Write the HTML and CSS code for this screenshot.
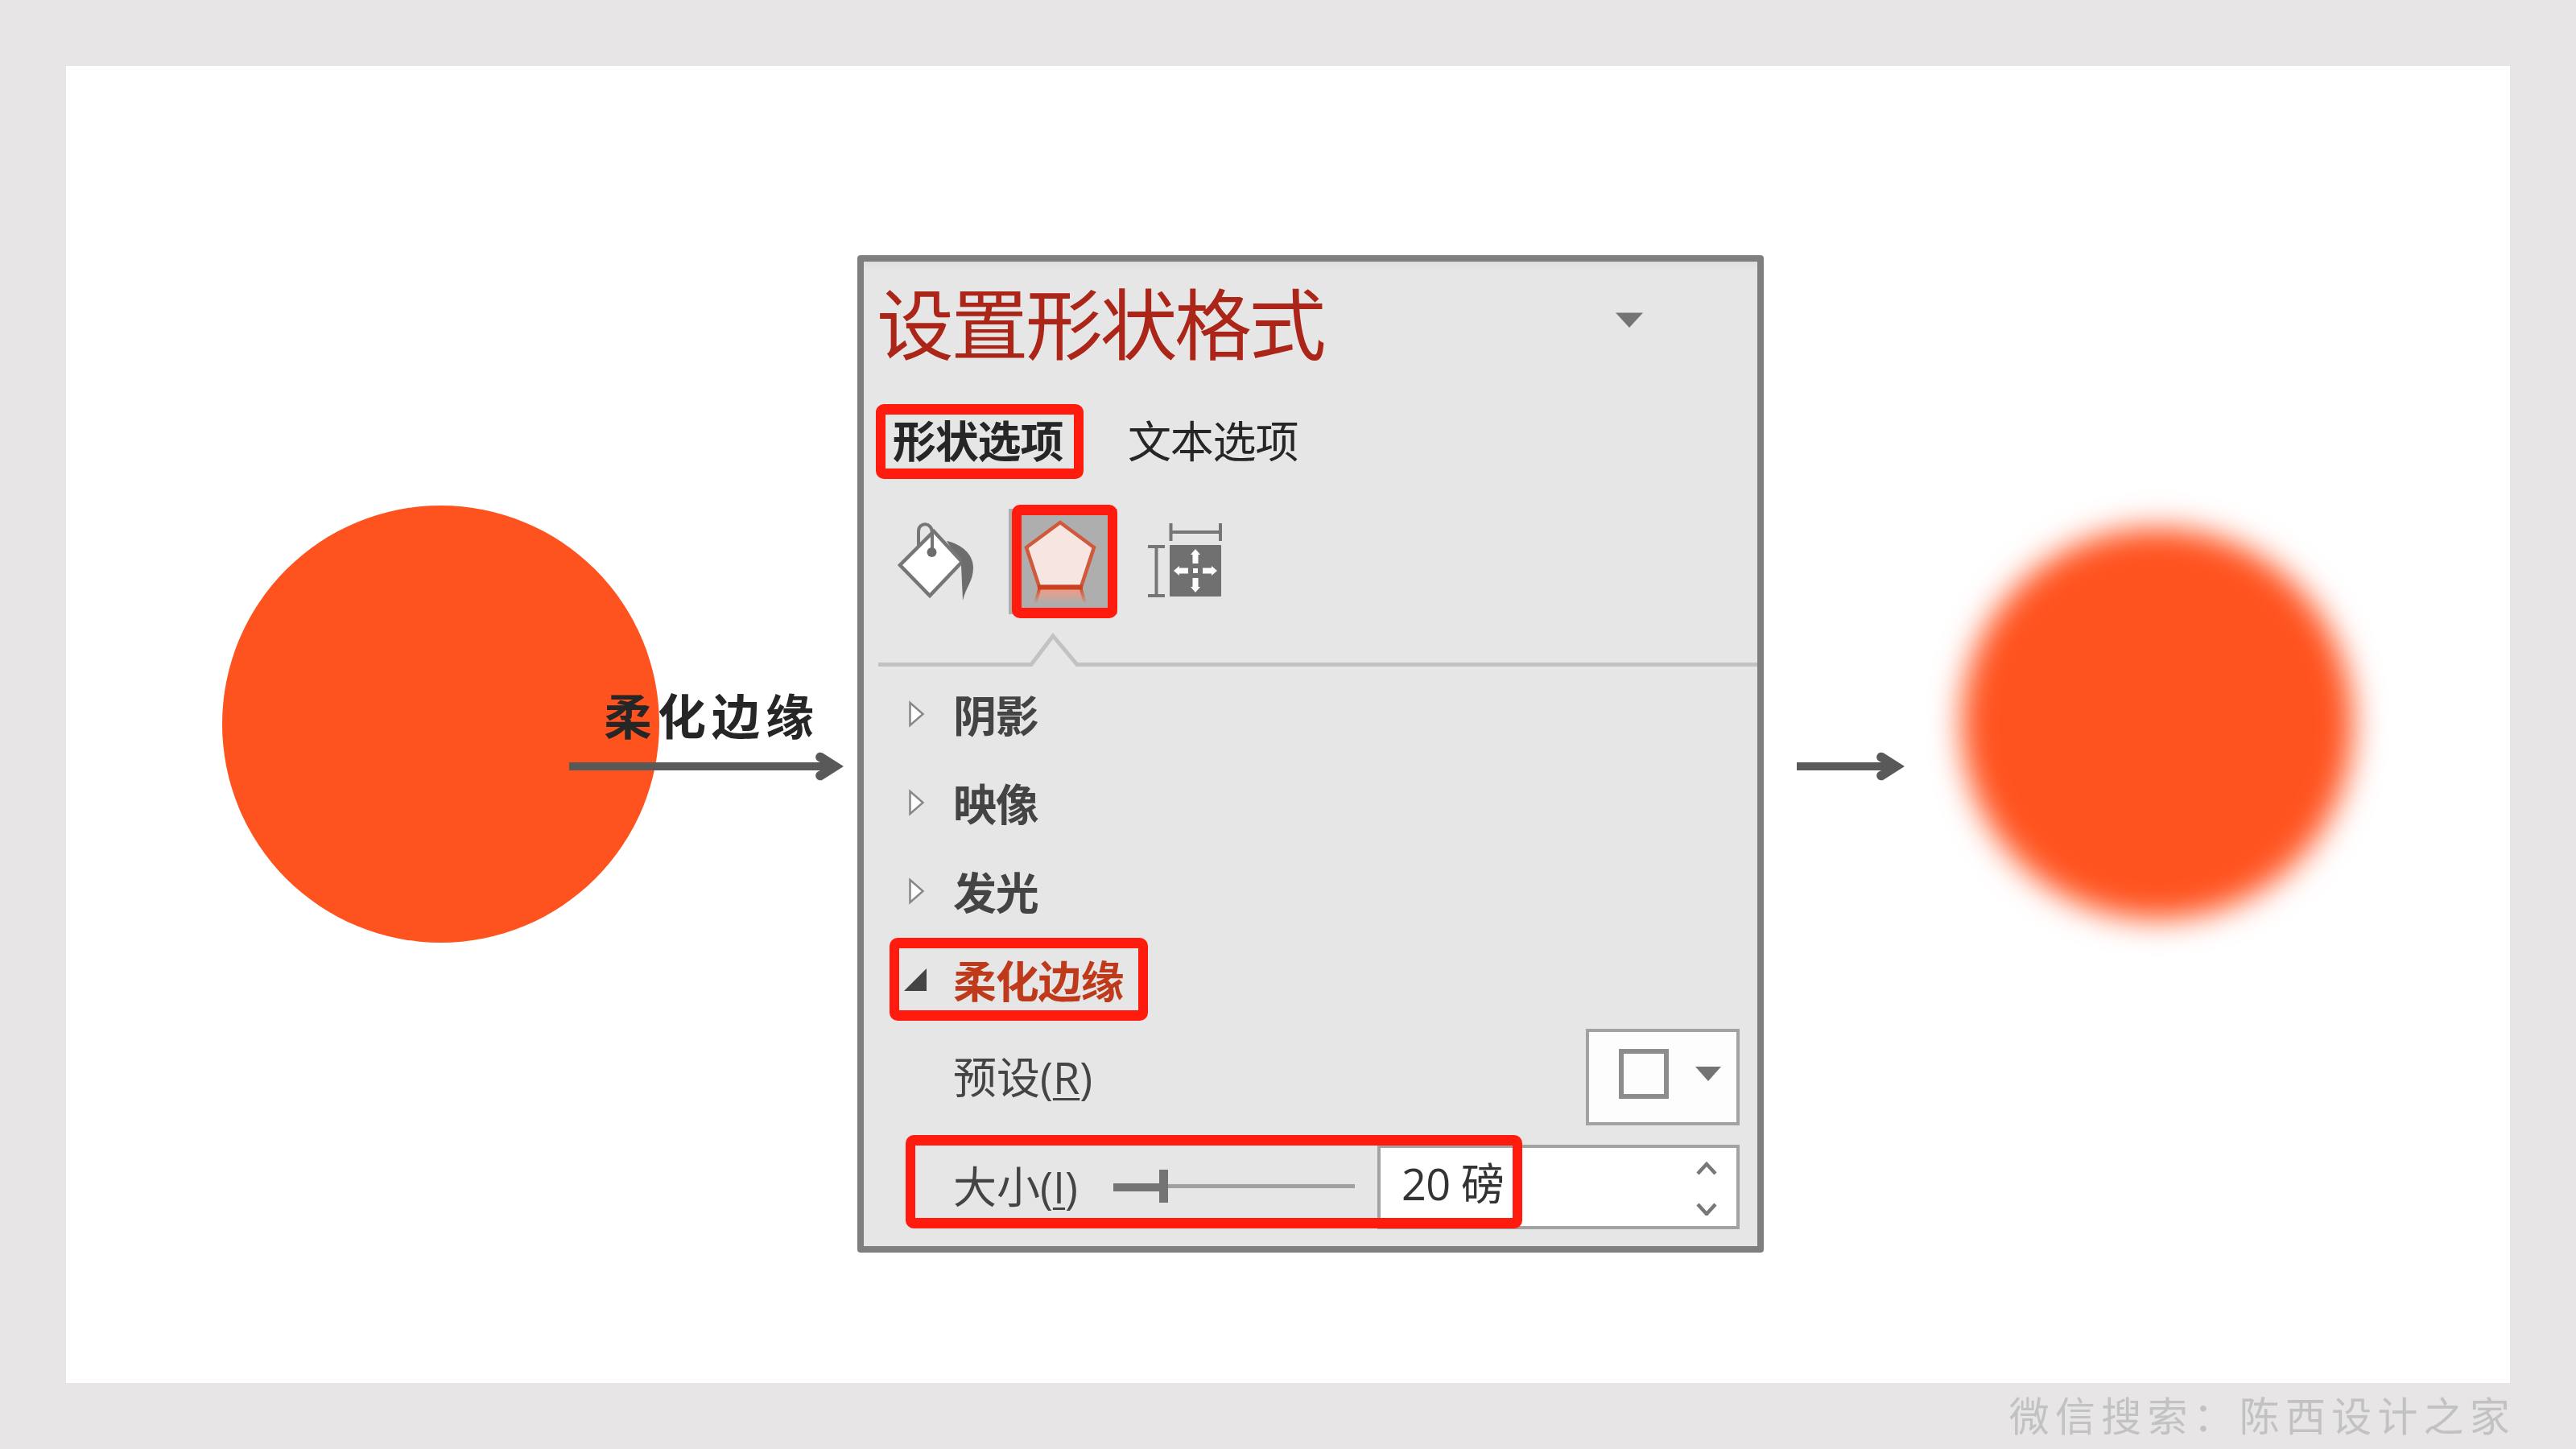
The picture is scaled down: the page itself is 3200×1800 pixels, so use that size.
FILE: index.html
```html
<!DOCTYPE html>
<html lang="zh">

<head>
  <meta charset="UTF-8">
  <meta name="viewport" content="width=device-width, initial-scale=1.0">
  <title>柔化边缘</title>
  <link rel="stylesheet" href="styles.css">
</head>

<body>
  <div class="slide">
    <div class="circle"></div>
    <div class="step">
      <p>柔化边缘</p>
      <svg class="arrow" width="341" height="36" viewBox="0 0 341 36">
        <path d="M0 13H312L309 11.500A5 5 0 0 1 315 1.500L341 18L315 34.500A5 5 0 0 1 309 24.500L312 23H0z"/>
      </svg>
    </div>

    <div class="panel">
      <div class="header">
        <h1>设置形状格式</h1>
        <svg width="34" height="20" viewBox="0 0 34 20"><path d="M0 0.500H34L17 19z" fill="#747474"/></svg>
      </div>

      <div class="tabs">
        <div class="tab active mark">形状选项</div>
        <div class="tab">文本选项</div>
      </div>

      <div class="icons">
        <!-- 填充 -->
        <svg class="fill" width="100" height="104" viewBox="0 0 100 104">
          <path d="M62 27C80 31 95 43 95 60C95 77 86 84 82 101L80 57z" fill="#6d6d6d"/>
          <path d="M46 15L81 53L41 95L4 57z" fill="#fff" stroke="#767676" stroke-width="4.500"/>
          <path d="M80 50L84 53L81 58z" fill="#6d6d6d"/>
          <path d="M27 35V15C27 3 44 3 44 17V40" fill="none" stroke="#767676" stroke-width="4"/>
          <circle cx="43.500" cy="41" r="6" fill="#6d6d6d"/>
        </svg>
        <!-- 效果 -->
        <div class="effect mark">
          <svg width="106" height="116" viewBox="0 0 106 116">
            <defs>
              <linearGradient id="fade" x1="0" y1="0" x2="0" y2="1">
                <stop offset="0" stop-color="#ee9c86"/>
                <stop offset="1" stop-color="#aeaeae"/>
              </linearGradient>
              <linearGradient id="leg" gradientUnits="userSpaceOnUse" x1="0" y1="92" x2="0" y2="110">
                <stop offset="0" stop-color="#d4512f"/>
                <stop offset="1" stop-color="#d4512f" stop-opacity="0"/>
              </linearGradient>
            </defs>
            <path d="M21 92H75L80 110H16z" fill="url(#fade)"/>
            <path d="M22 92L17 110M74 92L79 110" stroke="url(#leg)" stroke-width="4" fill="none"/>
            <path d="M48 9L90 40L74 89H22L6 40z" fill="#f6e5e0" stroke="#d0593c" stroke-width="4.500"/>
            <path d="M20 89.500H76" stroke="#cb4020" stroke-width="6"/>
          </svg>
        </div>
        <!-- 大小与属性 -->
        <svg class="size" width="94" height="94" viewBox="0 0 94 94">
          <path d="M29.500 1V23M91 1V23M29.500 12H91M1 30H22M1 91H22M11.500 30V91" fill="none" stroke="#767676" stroke-width="4"/>
          <rect x="28" y="28" width="64" height="64" rx="1" fill="#707070"/>
          <g fill="#fff">
            <rect x="57" y="57" width="6" height="6"/>
            <path d="M60 33L66 40H63.500V51H56.500V40H54z"/>
            <path d="M60 87L66 80H63.500V69H56.500V80H54z"/>
            <path d="M33 60L40 54V56.500H51V63.500H40V66z"/>
            <path d="M87 60L80 54V56.500H69V63.500H80V66z"/>
          </g>
        </svg>
      </div>

      <svg class="divider" width="1092" height="45" viewBox="0 0 1092 45">
        <path d="M0 40.500H190L217 5L247 40.500H1092" fill="none" stroke="#c2c2c2" stroke-width="5"/>
      </svg>

      <ul>
        <li>
          <svg width="20" height="34" viewBox="0 0 20 34"><path d="M1.500 3V31L17.500 17z"/></svg>
          <span>阴影</span>
        </li>
        <li>
          <svg width="20" height="34" viewBox="0 0 20 34"><path d="M1.500 3V31L17.500 17z"/></svg>
          <span>映像</span>
        </li>
        <li>
          <svg width="20" height="34" viewBox="0 0 20 34"><path d="M1.500 3V31L17.500 17z"/></svg>
          <span>发光</span>
        </li>
        <li class="open mark">
          <svg width="28" height="28" viewBox="0 0 28 28"><path d="M28 0V28H0z"/></svg>
          <span>柔化边缘</span>
        </li>
      </ul>

      <div class="row preset">
        <label>预设(<u>R</u>)</label>
        <div class="select">
          <i></i>
          <svg width="32" height="18" viewBox="0 0 32 18"><path d="M0 0H32L16 18z" fill="#747474"/></svg>
        </div>
      </div>

      <div class="row amount mark">
        <label>大小(<u>I</u>)</label>
        <div class="slider">
          <div class="done"></div>
          <div class="thumb"></div>
          <div class="rest"></div>
        </div>
        <div class="input">
          <span>20 磅</span>
          <svg width="26" height="68" viewBox="0 0 26 68"><path d="M2 16L13 4L24 16M2 54L13 66L24 54" fill="none" stroke="#777" stroke-width="4.500"/></svg>
        </div>
      </div>
    </div>

    <svg class="arrow short" width="134" height="36" viewBox="0 0 134 36">
      <path d="M0 13H105L102 11.500A5 5 0 0 1 108 1.500L134 18L108 34.500A5 5 0 0 1 102 24.500L105 23H0z"/>
    </svg>
    <div class="circle soft"></div>
  </div>
  <div class="footer">微信搜索：陈西设计之家</div>
</body>

</html>
```

FILE: styles.css
```css
body{
  margin: 0;
  padding: 82px 82px 0;
  height: 1800px;
  box-sizing: border-box;
  overflow: hidden;
  background: #e7e5e6;
  font-family: "Noto Sans CJK SC", sans-serif;
}
h1,p,ul{
  margin: 0;
  padding: 0;
  list-style: none;
}
svg{
  display: block;
  flex-shrink: 0;
}
.slide{
  display: flex;
  align-items: flex-start;
  height: 1636px;
  background: #fff;
}
.circle{
  flex-shrink: 0;
  width: 543px;
  height: 543px;
  margin: 546px 0 0 194px;
  border-radius: 50%;
  background: #ff531f;
}
.circle.soft{
  width: 486px;
  height: 486px;
  margin: 574px 0 0 71px;
  filter: blur(19px);
}
.step{
  position: relative;
  width: 341px;
  margin: 764px 17px 0 -112px;
}
.step p{
  height: 88px;
  padding-left: 43px;
  font-size: 60px;
  line-height: 82px;
  font-weight: 700;
  letter-spacing: 7px;
  white-space: nowrap;
  color: #262626;
}
.arrow{
  fill: #595959;
}
.arrow.short{
  margin: 852px 0 0 41px;
}
.panel{
  flex-shrink: 0;
  box-sizing: border-box;
  width: 1126px;
  height: 1239px;
  margin-top: 235px;
  border: 8px solid #7f7f7f;
  border-radius: 4px;
  background: linear-gradient(#dedede, #e6e6e6 12px);
  font-size: 54px;
  letter-spacing: -1.200px;
  color: #444;
}
.header{
  display: flex;
  align-items: center;
  justify-content: space-between;
  height: 146px;
  padding: 0 142px 0 16px;
}
.header h1{
  font-size: 96px;
  line-height: 146px;
  font-weight: 400;
  letter-spacing: -3.500px;
  color: #ab2618;
}
/* 红色标注框 */
.mark{
  position: relative;
}
.mark::after{
  content: "";
  position: absolute;
  top: 0;
  left: 0;
  right: 0;
  bottom: 0;
  border: 13px solid #ff1c0e;
  border-width: 13px 12px;
  border-radius: 10px;
}
.tabs{
  display: flex;
  gap: 55px;
  margin: 31px 0 0 15px;
}
.tab{
  height: 93px;
  line-height: 88px;
  color: #262626;
}
.tab.active{
  box-sizing: border-box;
  width: 258px;
  padding-left: 21px;
  font-weight: 700;
}
.icons{
  display: flex;
  align-items: flex-start;
  height: 141px;
  margin-top: 32px;
}
.icons .fill{
  margin: 18px 0 0 41px;
}
.effect{
  width: 131px;
  height: 141px;
  margin-left: 43px;
  background: linear-gradient(#aeaeae, #aeaeae) 0 5px / 100% 131px no-repeat;
}
.effect::before{
  content: "";
  position: absolute;
  top: 5px;
  left: -4px;
  width: 4px;
  height: 131px;
  background: #aeaeae;
}
.effect svg{
  margin: 13px 12px;
}
.icons .size{
  margin: 22px 0 0 37px;
}
.divider{
  margin: 17px 0 4px 18px;
}
li{
  display: flex;
  align-items: center;
  box-sizing: border-box;
  height: 110px;
  padding: 0 0 5px 56px;
  font-weight: 700;
}
li svg{
  margin-right: 35px;
  fill: #fff;
  stroke: #888;
  stroke-width: 2.500px;
}
li.open{
  padding-left: 50px;
  color: #be3a1b;
}
li.open svg{
  margin-right: 33px;
  fill: #444;
  stroke: none;
}
li.open::after{
  top: 1px;
  left: 32px;
  right: 757px;
  bottom: 6px;
}
.row{
  display: flex;
  align-items: center;
  padding: 0 22px 0 111px;
  font-family: "Open Sans", "Noto Sans CJK SC", sans-serif;
}
.row label{
  padding-bottom: 5px;
  letter-spacing: 0;
}
.row u{
  text-decoration-thickness: 3px;
  text-underline-offset: 5px;
}
.preset{
  justify-content: space-between;
  height: 120px;
  margin-top: 4px;
}
.select{
  display: flex;
  align-items: center;
  justify-content: space-between;
  box-sizing: border-box;
  width: 191px;
  height: 120px;
  padding: 0 19px 9px 37px;
  border: 4px solid #a2a2a2;
  background: #fdfdfd;
}
.select i{
  box-sizing: border-box;
  width: 62px;
  height: 62px;
  border: 6px solid #8d8d8d;
}
.amount{
  height: 105px;
  margin-top: 24px;
}
.amount label{
  width: 199px;
  padding-bottom: 7px;
}
.amount::after{
  top: -12px;
  left: 52px;
  right: 292px;
  bottom: 1px;
}
.slider{
  display: flex;
  align-items: center;
  width: 300px;
  margin: 0 28px 3px 0;
}
.done{
  width: 57px;
  height: 10px;
  margin-top: 4px;
  background: #747474;
}
.thumb{
  width: 11px;
  height: 41px;
  background: #747474;
}
.rest{
  flex: 1;
  height: 5px;
  background: #a0a0a0;
}
.input{
  display: flex;
  flex: 1;
  align-items: center;
  justify-content: space-between;
  box-sizing: border-box;
  height: 105px;
  padding: 0 24px 0 26px;
  border: 4px solid #a2a2a2;
  background: #fff;
  color: #333;
}
.input span{
  padding-bottom: 14px;
  letter-spacing: -.600px;
}
.input svg{
  margin-top: 3px;
}
.footer{
  height: 82px;
  margin-right: -7px;
  line-height: 76px;
  font-size: 50px;
  font-weight: 400;
  letter-spacing: 7.200px;
  text-align: right;
  color: #c2c2c2;
}
```
